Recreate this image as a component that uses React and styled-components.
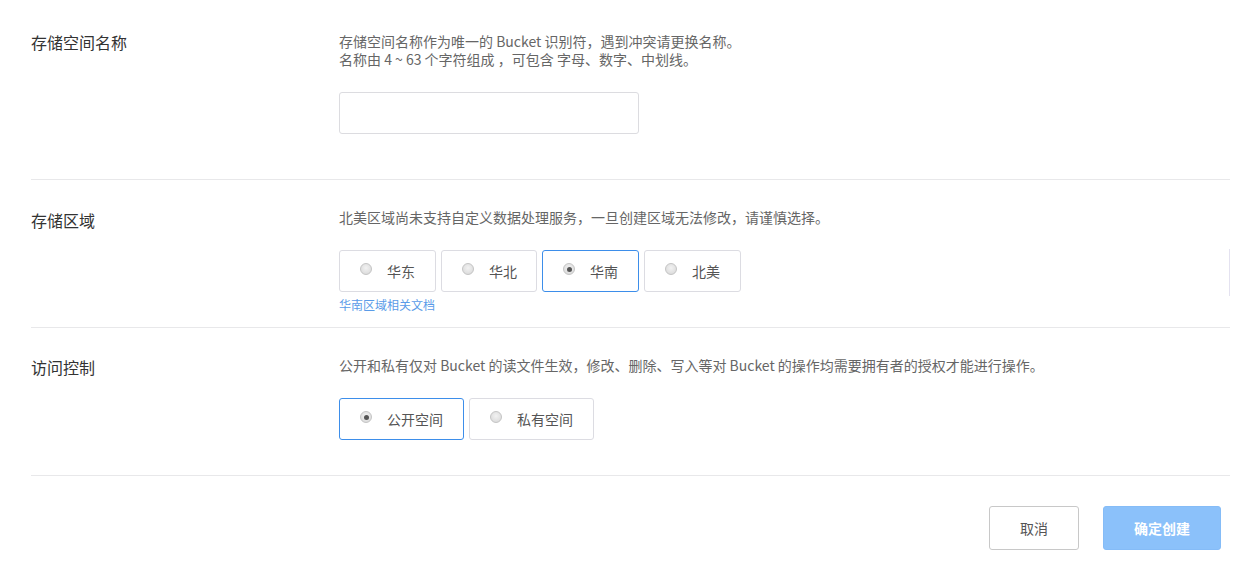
import React, { useState } from "react";
import styled, { createGlobalStyle } from "styled-components";

const Global = createGlobalStyle`
  html, body { margin: 0; padding: 0; background: #fff; }
  body { font-family: "Noto Sans CJK SC", "Open Sans", sans-serif; }
  * { box-sizing: border-box; }
`;

const Page = styled.div`
  padding: 0 18px 0 31px;
  width: 1248px;
`;

const Section = styled.section`
  display: flex;
  padding: ${(p) => p.$pad};
  border-bottom: 1px solid #e8e8ea;
`;

const Label = styled.div`
  width: 308px;
  flex: none;
  font-size: 16px;
  line-height: 22px;
  color: #333;
  padding-top: ${(p) => p.$offset || 0}px;
  margin-top: ${(p) => (p.$offset < 0 ? p.$offset : 0)}px;
`;

const Body = styled.div`
  flex: 1;
  display: flex;
  flex-direction: column;
  align-items: flex-start;
  position: relative;
`;

const Desc = styled.p`
  margin: 0;
  font-size: 14px;
  line-height: 18px;
  color: #666;
`;

const Input = styled.input`
  margin-top: 24px;
  width: 300px;
  height: 42px;
  border: 1px solid #dcdce0;
  border-radius: 3px;
  outline: none;
  padding: 0 10px;
  font-size: 14px;
`;

const RadioRow = styled.div`
  display: flex;
  gap: 5px;
  margin-top: 24px;
`;

const RadioBox = styled.label`
  width: ${(p) => p.$w}px;
  height: 42px;
  display: flex;
  align-items: center;
  padding-left: 20px;
  gap: 15px;
  border: 1px solid ${(p) => (p.$on ? "#3d8eea" : "#dcdce2")};
  border-radius: 3px;
  font-size: 14px;
  color: #555;
  cursor: pointer;
  background: #fff;
`;

const Dot = styled.span`
  width: 12px;
  height: 12px;
  border-radius: 50%;
  border: 1px solid #c4c4c4;
  background: radial-gradient(circle at 50% 40%, #f2f2f2 0%, #d6d6d6 100%);
  display: flex;
  align-items: center;
  justify-content: center;
  margin-top: -4px;
  &::after {
    content: "";
    width: 5px;
    height: 5px;
    border-radius: 50%;
    background: #555;
    display: ${(p) => (p.$on ? "block" : "none")};
  }
`;

const DocLink = styled.a`
  margin-top: 5px;
  font-size: 12px;
  line-height: 16px;
  color: #5a9be8;
  text-decoration: none;
`;

const VLine = styled.div`
  position: absolute;
  right: 0;
  top: 41px;
  width: 1px;
  height: 47px;
  background: #e4e2f0;
`;

const Footer = styled.div`
  display: flex;
  justify-content: flex-end;
  gap: 24px;
  padding: 30px 9px 0 0;
`;

const Button = styled.button`
  height: 44px;
  width: ${(p) => p.$w}px;
  border-radius: 3px;
  font-family: inherit;
  font-size: 14px;
  border: 1px solid ${(p) => (p.$primary ? "#85bcf7" : "#c8c8c8")};
  background: ${(p) => (p.$primary ? "#8bc1fa" : "#fff")};
  color: ${(p) => (p.$primary ? "#fff" : "#555")};
  font-weight: ${(p) => (p.$primary ? 600 : 400)};
  cursor: pointer;
`;

function RadioGroup({ options, value, onChange }) {
  return (
    <RadioRow>
      {options.map((o) => (
        <RadioBox key={o.v} $w={o.w} $on={value === o.v} onClick={() => onChange(o.v)}>
          <Dot $on={value === o.v} />
          <span>{o.v}</span>
        </RadioBox>
      ))}
    </RadioRow>
  );
}

export default function App() {
  const [region, setRegion] = useState("华南");
  const [access, setAccess] = useState("公开空间");
  return (
    <>
      <Global />
      <Page>
        <Section $pad="32px 0 45px">
          <Label $offset={-1}>存储空间名称</Label>
          <Body>
            <Desc>
              存储空间名称作为唯一的 Bucket 识别符，遇到冲突请更换名称。
              <br />
              名称由 4 ~ 63 个字符组成 ，可包含 字母、数字、中划线。
            </Desc>
            <Input />
          </Body>
        </Section>
        <Section $pad="28px 0 14px">
          <Label $offset={1}>存储区域</Label>
          <Body>
            <Desc>北美区域尚未支持自定义数据处理服务，一旦创建区域无法修改，请谨慎选择。</Desc>
            <RadioGroup
              value={region}
              onChange={setRegion}
              options={[
                { v: "华东", w: 97 },
                { v: "华北", w: 96 },
                { v: "华南", w: 97 },
                { v: "北美", w: 97 },
              ]}
            />
            <DocLink href="#">华南区域相关文档</DocLink>
            <VLine />
          </Body>
        </Section>
        <Section $pad="28px 0 35px">
          <Label $offset={0}>访问控制</Label>
          <Body>
            <Desc>公开和私有仅对 Bucket 的读文件生效，修改、删除、写入等对 Bucket 的操作均需要拥有者的授权才能进行操作。</Desc>
            <RadioGroup
              value={access}
              onChange={setAccess}
              options={[
                { v: "公开空间", w: 125 },
                { v: "私有空间", w: 125 },
              ]}
            />
          </Body>
        </Section>
        <Footer>
          <Button $w={90}>取消</Button>
          <Button $w={118} $primary>确定创建</Button>
        </Footer>
      </Page>
    </>
  );
}
